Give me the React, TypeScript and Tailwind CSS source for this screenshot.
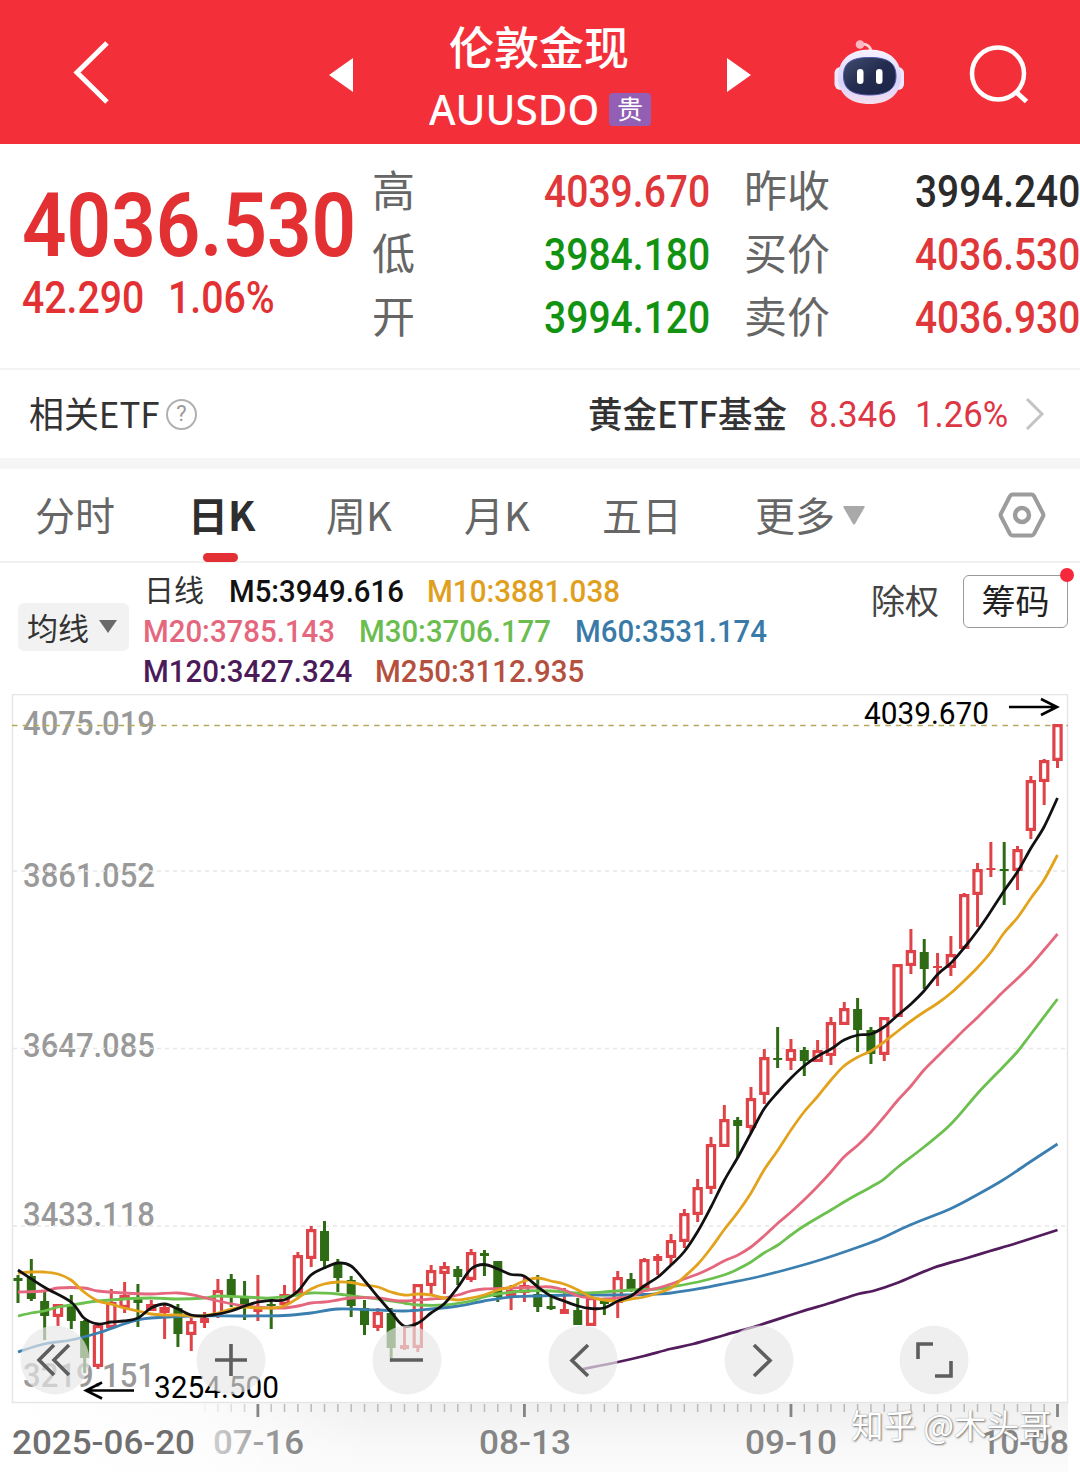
import { useLayoutEffect, useRef, useState, type ReactNode } from 'react';
import clsx from 'clsx';

const RED = '#df4348';
const GREEN = '#2f6b14';
const STEP = 13.327;
const START_X = 18;

// [direction, high, body top, body bottom, low]
type Candle = ['u' | 'd', number, number, number, number];

const candles: Candle[] = [
  ['d', 1275, 1278, 1281, 1303],
  ['d', 1259, 1276, 1299, 1301],
  ['d', 1290, 1301, 1316, 1340],
  ['u', 1304, 1304, 1317, 1326],
  ['d', 1295, 1304, 1321, 1329],
  ['d', 1320, 1321, 1358, 1373],
  ['u', 1323, 1325, 1367, 1369],
  ['u', 1289, 1302, 1328, 1328],
  ['u', 1282, 1295, 1308, 1313],
  ['d', 1284, 1297, 1303, 1327],
  ['u', 1300, 1304, 1311, 1311],
  ['u', 1305, 1307, 1313, 1339],
  ['d', 1304, 1308, 1334, 1347],
  ['u', 1318, 1321, 1335, 1351],
  ['u', 1312, 1318, 1323, 1328],
  ['u', 1279, 1290, 1317, 1318],
  ['d', 1274, 1279, 1297, 1307],
  ['d', 1281, 1298, 1307, 1320],
  ['u', 1275, 1307, 1312, 1321],
  ['d', 1298, 1304, 1306, 1329],
  ['u', 1285, 1294, 1305, 1308],
  ['u', 1252, 1255, 1294, 1294],
  ['u', 1226, 1229, 1259, 1267],
  ['d', 1221, 1231, 1261, 1268],
  ['d', 1259, 1263, 1278, 1292],
  ['d', 1276, 1280, 1306, 1317],
  ['d', 1300, 1308, 1325, 1335],
  ['u', 1308, 1312, 1328, 1331],
  ['d', 1308, 1313, 1348, 1362],
  ['u', 1325, 1345, 1349, 1350],
  ['u', 1284, 1284, 1348, 1352],
  ['u', 1265, 1270, 1286, 1295],
  ['u', 1262, 1266, 1274, 1294],
  ['d', 1266, 1269, 1277, 1285],
  ['u', 1249, 1252, 1280, 1282],
  ['d', 1250, 1253, 1256, 1276],
  ['d', 1261, 1261, 1297, 1302],
  ['u', 1285, 1290, 1296, 1310],
  ['u', 1277, 1285, 1293, 1302],
  ['d', 1275, 1294, 1307, 1312],
  ['d', 1296, 1306, 1309, 1310],
  ['u', 1288, 1309, 1314, 1314],
  ['d', 1298, 1310, 1325, 1325],
  ['u', 1295, 1297, 1326, 1326],
  ['d', 1298, 1301, 1304, 1315],
  ['u', 1271, 1277, 1303, 1318],
  ['d', 1273, 1279, 1290, 1292],
  ['u', 1258, 1259, 1288, 1288],
  ['u', 1254, 1256, 1261, 1275],
  ['u', 1234, 1240, 1258, 1265],
  ['u', 1209, 1213, 1242, 1248],
  ['u', 1179, 1187, 1215, 1222],
  ['u', 1137, 1144, 1189, 1194],
  ['u', 1105, 1119, 1147, 1147],
  ['d', 1117, 1120, 1126, 1158],
  ['u', 1087, 1098, 1128, 1133],
  ['u', 1049, 1057, 1095, 1104],
  ['d', 1027, 1058, 1059, 1068],
  ['u', 1039, 1049, 1061, 1070],
  ['d', 1047, 1050, 1061, 1076],
  ['u', 1040, 1050, 1062, 1062],
  ['u', 1017, 1022, 1056, 1065],
  ['u', 1002, 1008, 1025, 1025],
  ['d', 998, 1009, 1030, 1052],
  ['d', 1027, 1030, 1054, 1064],
  ['u', 1017, 1017, 1055, 1061],
  ['u', 964, 964, 1017, 1017],
  ['u', 929, 950, 966, 974],
  ['d', 939, 952, 969, 989],
  ['u', 953, 966, 968, 986],
  ['u', 936, 954, 968, 976],
  ['u', 893, 894, 949, 949],
  ['u', 863, 869, 895, 927],
  ['u', 842, 868, 870, 877],
  ['d', 842, 869, 870, 905],
  ['u', 846, 849, 871, 890],
  ['u', 776, 780, 831, 839],
  ['u', 759, 760, 782, 805],
  ['u', 724, 724, 761, 768],
];

const averages = [
  {
    color: '#531c5c',
    points:
      '583,1369 618,1362 644,1356 670,1349 693,1344 725,1335 760,1325 800,1312 830,1303 858,1294 873,1291 897,1283 933,1268 967,1258 990,1251 1017,1243 1057.5,1230',
  },
  {
    color: '#3a7fb0',
    points:
      '18,1352 44,1344 71,1340 98,1333 124,1324 138,1320 151,1318 191,1316 245,1316 284,1315.5 311,1313 338,1309 378,1310 404,1311 431,1309 458,1306 484,1301 511,1297 538,1296 578,1295 618,1295 644,1294.5 671,1293 703,1288 728,1283 753,1278 785,1270 820,1260 850,1250 880,1239 910,1225 950,1209 975,1196 1003,1180 1030,1162 1057.5,1144',
  },
  {
    color: '#6cc04e',
    points:
      '18,1316 31,1313 44,1311 58,1307 71,1305 84,1303 98,1301 124,1299 151,1298 178,1299 205,1298 218,1296 245,1297 271,1298 298,1295 311,1293 338,1294 351,1296 378,1299 404,1303 418,1305 444,1305 471,1301 484,1297 498,1294 524,1291 551,1291 578,1293 604,1292 631,1290 658,1289 671,1287 698,1282 724,1275 738,1269 751,1262 764,1253 778,1245 791,1235 804,1226 831,1210 844,1202 858,1194 871,1187 884,1179 898,1167 924,1147 951,1124 978,1093 1004,1066 1018,1051 1031,1034 1057.5,999',
  },
  {
    color: '#e5677e',
    points:
      '18,1292 44,1291 58,1288 84,1288 98,1291 124,1293 151,1294 178,1293 198,1296 218,1301 245,1306 271,1308 284,1308 298,1306 311,1303 324,1302 338,1300 351,1298 378,1298 391,1300 404,1301 431,1299 444,1298 458,1295 471,1291 484,1289 511,1288 538,1287 551,1287 564,1290 578,1296 591,1298 604,1299 631,1296 644,1291 658,1288 671,1284 684,1279 698,1274 711,1268 724,1261 738,1255 751,1247 764,1236 778,1223 791,1212 804,1200 818,1186 831,1172 844,1157 858,1145 871,1132 884,1117 898,1100 911,1086 924,1070 938,1056 951,1043 964,1030 978,1017 991,1004 1004,991 1018,978 1031,965 1044,950 1057.5,934',
  },
  {
    color: '#e3a21b',
    points:
      '18,1273 31,1272 44,1272 58,1274 71,1280 84,1292 98,1301 111,1304 124,1308 138,1311 151,1314 165,1315 178,1315 191,1316 205,1315.5 218,1313 231,1309 245,1307 258,1308 271,1308 284,1306 298,1298 311,1289 324,1284 338,1282 351,1282.5 364,1285 378,1287 391,1292 404,1295 418,1294 431,1295 444,1298 458,1300 471,1298 484,1295 498,1290 511,1287 524,1281 538,1278 551,1281 564,1284 578,1290 591,1297 604,1300 618,1301 631,1299 644,1297 658,1293 671,1288 684,1277 698,1264 711,1248 724,1230 738,1212 751,1193 764,1170 778,1150 791,1130 804,1112 818,1096 831,1080 844,1066 858,1057 871,1051 884,1042 898,1031 911,1021 924,1012 938,1003 951,993 964,981 978,967 991,952 1004,933 1018,917 1031,898 1044,880 1057.5,855',
  },
  {
    color: '#111111',
    points:
      '18,1270 44,1287 71,1302 84,1318 98,1324 111,1322 124,1321 138,1318 151,1308 165,1304 178,1309 191,1315 205,1316 218,1314 231,1311 245,1306 258,1302 271,1300.5 284,1300 298,1291 311,1275 324,1268 338,1263 351,1266 364,1280 378,1297 391,1312 404,1326 418,1323 431,1313 444,1304 458,1287 471,1269 484,1264.5 498,1269 511,1274.5 524,1276 538,1287 551,1296 564,1301 578,1306 591,1308.5 604,1308 618,1301 631,1296 644,1286 658,1277 671,1265 684,1252 698,1231 711,1207 724,1181 738,1157 751,1133 764,1109 778,1092 791,1078 804,1066 818,1056 831,1049 844,1040 858,1035 871,1034 884,1027 898,1015 911,1004 924,991 938,974 951,963 964,948 978,930 991,911 1004,891 1018,871 1031,848 1044,827 1057.5,798',
  },
];

const yLabels = [
  { text: '4075.019', y: 735 },
  { text: '3861.052', y: 887 },
  { text: '3647.085', y: 1056.5 },
  { text: '3433.118', y: 1226 },
  { text: '3219.151', y: 1387 },
];

const dates = [
  { text: '2025-06-20', x: 12, w: 183, fill: '#6f6f6f' },
  { text: '07-16', x: 213, w: 91, fill: 'url(#dateFade)' },
  { text: '08-13', x: 479, w: 92, fill: '#858585' },
  { text: '09-10', x: 745, w: 92, fill: '#858585' },
  { text: '10-08', x: 981, w: 88, fill: '#858585' },
];

// Catmull-Rom spline through the points
function smooth(points: string) {
  const p = points.split(' ').map((s) => s.split(',').map(Number));
  let d = `M${p[0][0]} ${p[0][1]}`;
  for (let i = 0; i < p.length - 1; i++) {
    const a = p[Math.max(i - 1, 0)];
    const b = p[i];
    const c = p[i + 1];
    const e = p[Math.min(i + 2, p.length - 1)];
    d += `C${b[0] + (c[0] - a[0]) / 6} ${b[1] + (c[1] - a[1]) / 6} ${c[0] - (e[0] - b[0]) / 6} ${c[1] - (e[1] - b[1]) / 6} ${c[0]} ${c[1]}`;
  }
  return d;
}

// Squeezes its text horizontally to the width of the box
function Fit({ className, children }: { className?: string; children: ReactNode }) {
  const box = useRef<HTMLSpanElement>(null);
  const inner = useRef<HTMLSpanElement>(null);
  const [scale, setScale] = useState(1);

  useLayoutEffect(() => {
    if (box.current && inner.current) {
      setScale(box.current.clientWidth / inner.current.offsetWidth);
    }
  }, []);

  return (
    <span ref={box} className={clsx('block shrink-0 whitespace-nowrap', className)}>
      <span ref={inner} className="inline-block origin-left" style={{ transform: `scaleX(${scale})` }}>
        {children}
      </span>
    </span>
  );
}

function RobotIcon() {
  return (
    <svg width="72" height="66" viewBox="0 0 72 66" className="shrink-0">
      <defs>
        <linearGradient id="shell" x1="0" y1="0" x2="0" y2="1">
          <stop offset="0" stopColor="#f7f2ff" />
          <stop offset="0.6" stopColor="#d9d3fa" />
          <stop offset="1" stopColor="#f5dfee" />
        </linearGradient>
        <linearGradient id="visor" x1="0" y1="0" x2="1" y2="1">
          <stop offset="0" stopColor="#414d70" />
          <stop offset="0.5" stopColor="#232c4e" />
          <stop offset="1" stopColor="#1b2447" />
        </linearGradient>
      </defs>
      <path d="M27 5.500C33 4 37.500 7 38 12" fill="none" stroke="#fbd3d8" strokeWidth="2.600" />
      <circle cx="27" cy="5.500" r="4.300" fill="#fbb8c2" />
      <rect x="1.500" y="28" width="12" height="23" rx="6" fill="#efe8fc" />
      <rect x="59" y="28" width="12" height="23" rx="6" fill="#efe8fc" />
      <path
        d="M36.500 10.500C57 10.500 68 22 68 38C68 55 56 65 36.500 65C17 65 5 55 5 38C5 22 16 10.500 36.500 10.500Z"
        fill="url(#shell)"
      />
      <path
        d="M36.500 18.500C55 18.500 63 24 63 37C63 50 54 56 36.500 56C19 56 10.500 50 10.500 37C10.500 24 18 18.500 36.500 18.500Z"
        fill="url(#visor)"
        stroke="#4e56a8"
        strokeWidth="1"
      />
      <rect x="24" y="30" width="6.500" height="15" rx="3.200" fill="#fff" />
      <rect x="43" y="30" width="6.500" height="15" rx="3.200" fill="#fff" />
    </svg>
  );
}

function Header() {
  return (
    <header className="flex h-36 items-start bg-[#f33039] text-white">
      <svg width="40" height="66" viewBox="0 0 40 66" className="ml-[72px] mt-10 shrink-0">
        <path d="M35 3L5 32.500L35 62" fill="none" stroke="currentColor" strokeWidth="5" />
      </svg>
      <svg width="24" height="34" viewBox="0 0 24 34" className="ml-[217px] mt-[58px] shrink-0">
        <path d="M24 0V34L0 17Z" fill="currentColor" />
      </svg>
      <div className="ml-[76px] mt-[18px] flex w-[224px] flex-col">
        <div className="ml-5 text-[45px] font-medium leading-[56px]">伦敦金现</div>
        <div className="mt-1.5 flex items-center">
          <Fit className="h-[58px] w-[170px] font-['Noto_Sans'] text-[42px] font-medium leading-[57px]">AUUSDO</Fit>
          <span className="ml-2.5 flex h-[33px] w-[42px] items-center justify-center rounded-sm bg-[#925fb4] pb-0.5 text-[26px] leading-none">
            贵
          </span>
        </div>
      </div>
      <svg width="24" height="34" viewBox="0 0 24 34" className="ml-[74px] mt-[58px] shrink-0">
        <path d="M0 0V34L24 17Z" fill="currentColor" />
      </svg>
      <div className="ml-[82px] mt-[39px]">
        <RobotIcon />
      </div>
      <svg width="62" height="62" viewBox="0 0 62 62" className="ml-16 mt-11 shrink-0">
        <circle cx="29" cy="29.500" r="26" fill="none" stroke="currentColor" strokeWidth="4.500" />
        <path d="M47 48L57.500 57.500" stroke="currentColor" strokeWidth="5" />
      </svg>
    </header>
  );
}

const quotes = [
  { label: '高', value: '4039.670', tone: 'text-[#df373a]', label2: '昨收', value2: '3994.240', tone2: 'text-[#2b2b2b]' },
  { label: '低', value: '3984.180', tone: 'text-[#119311]', label2: '买价', value2: '4036.530', tone2: 'text-[#df373a]' },
  { label: '开', value: '3994.120', tone: 'text-[#119311]', label2: '卖价', value2: '4036.930', tone2: 'text-[#df373a]' },
];

function QuotePanel() {
  return (
    <section className="flex h-[226px] border-b-2 border-[#f3f3f3]">
      <div className="ml-[22px] w-[350px] font-['Roboto'] font-medium text-[#e23033]">
        <Fit className="mt-9 h-[92px] w-[334px] text-[89px] font-semibold leading-[92px]">4036.530</Fit>
        <div className="mt-1 flex h-[44px] text-[44px] leading-[44px]">
          <Fit className="w-[122px]">42.290</Fit>
          <Fit className="ml-6 w-[107px]">1.06%</Fit>
        </div>
      </div>
      <div className="mt-[17px] flex flex-col">
        {quotes.map((q) => (
          <div key={q.label} className="flex h-[63px] items-start text-[43px] leading-[57px] text-[#666]">
            <span className="-mt-px w-[172px]">{q.label}</span>
            <Fit className={clsx("h-[63px] w-[166px] font-['Roboto'] text-[44px] font-medium leading-[63px]", q.tone)}>
              {q.value}
            </Fit>
            <span className="-mt-px ml-[34px] w-[171px]">{q.label2}</span>
            <Fit className={clsx("h-[63px] w-[165px] font-['Roboto'] text-[44px] font-medium leading-[63px]", q.tone2)}>
              {q.value2}
            </Fit>
          </div>
        ))}
      </div>
    </section>
  );
}

function EtfRow() {
  return (
    <section className="flex h-[88px] items-center text-[36px] leading-[46px] text-[#333]">
      <Fit className="ml-[29px] h-[50px] w-[131px]">相关ETF</Fit>
      <span className="ml-1.5 flex h-[31px] w-[31px] items-center justify-center rounded-full border-2 border-[#b0b0b0] font-['Roboto'] text-[22px] leading-none text-[#999]">
        ?
      </span>
      <Fit className="ml-[391px] h-[50px] w-[199px] font-medium">黄金ETF基金</Fit>
      <Fit className="ml-[22px] h-[50px] w-[88px] font-['Roboto'] text-[37px] leading-[52px] text-[#dd3645]">8.346</Fit>
      <Fit className="ml-[18px] h-[50px] w-[93px] font-['Roboto'] text-[37px] leading-[52px] text-[#dd3645]">1.26%</Fit>
      <svg width="20" height="34" viewBox="0 0 20 34" className="ml-[17px]">
        <path d="M2 2L17 17L2 32" fill="none" stroke="#c4c4c4" strokeWidth="3" />
      </svg>
    </section>
  );
}

function Tabs() {
  return (
    <nav className="flex h-[94px] items-center border-b-2 border-[#f1f1f1] text-[40px] leading-[60px] text-[#666]">
      <span className="-mt-[3px] ml-[35px] w-[153px]">分时</span>
      <span className="relative -mt-[3px] w-[138px] font-bold text-[#2e2e2e]">
        日K
        <span className="absolute left-[15px] top-[69px] h-[9px] w-[35px] rounded-full bg-[#e23035]" />
      </span>
      <span className="-mt-[3px] w-[138px]">周K</span>
      <span className="-mt-[3px] w-[138px]">月K</span>
      <span className="-mt-[3px] w-[153px]">五日</span>
      <span className="-mt-[3px]">更多</span>
      <svg width="22" height="19" viewBox="0 0 22 19" className="ml-2">
        <path d="M1 0H21Q22 0 21.500 1.500L12 18Q11 19 10 18L0.500 1.500Q0 0 1 0Z" fill="#a9a9a9" />
      </svg>
      <svg width="48" height="46" viewBox="0 0 48 46" fill="none" stroke="#9c9c9c" className="ml-[133px]">
        <path
          d="M14.500 2.500H33.500Q35 2.500 36 4L45 21.500Q45.800 23 45 24.500L36 42Q35 43.500 33.500 43.500H14.500Q13 43.500 12 42L3 24.500Q2.200 23 3 21.500L12 4Q13 2.500 14.500 2.500Z"
          strokeWidth="4"
        />
        <circle cx="24" cy="23" r="7" strokeWidth="4.500" />
      </svg>
    </nav>
  );
}

function AverageBar() {
  return (
    <section className="flex h-[131px] text-[#333]">
      <button className="ml-[18px] mt-10 flex h-12 w-[111px] items-center rounded-md bg-[#f2f2f2] pb-px pl-[9px] text-[31px] leading-none">
        均线
        <svg width="18" height="13" viewBox="0 0 18 13" className="ml-2.5">
          <path d="M0 0H18L9 13Z" fill="#6a6a6a" />
        </svg>
      </button>
      <div className="ml-3.5 mt-2 w-[639px] font-['Roboto'] text-[32px] font-medium leading-10">
        <div className="flex h-10">
          <span className="ml-px w-[85px] font-['Noto_Sans_CJK_SC'] text-[30px] font-normal leading-[35px]">日线</span>
          <Fit className="w-[175px] text-[#111]">M5:3949.616</Fit>
          <Fit className="ml-[23px] w-[193px] text-[#e0a01e]">M10:3881.038</Fit>
        </div>
        <div className="flex h-10">
          <Fit className="w-[192px] text-[#e5677e]">M20:3785.143</Fit>
          <Fit className="ml-6 w-[192px] text-[#6cbd50]">M30:3706.177</Fit>
          <Fit className="ml-6 w-[192px] text-[#3a7aa8]">M60:3531.174</Fit>
        </div>
        <div className="flex h-10">
          <Fit className="w-[209px] text-[#4b1a58]">M120:3427.324</Fit>
          <Fit className="ml-[23px] w-[209px] text-[#b5503f]">M250:3112.935</Fit>
        </div>
      </div>
      <span className="ml-[89px] mt-[13px] text-[34px] leading-[48px] text-[#444]">除权</span>
      <button className="relative ml-6 mt-3 flex h-[53px] w-[105px] shrink-0 items-center justify-center rounded-md border-[1.5px] border-[#999] pb-[3px] text-[34px] leading-none text-[#222]">
        筹码
        <span className="absolute -right-[7px] -top-2 h-3.5 w-3.5 rounded-full bg-[#f5283c]" />
      </button>
    </section>
  );
}

function CandleMark({ candle, x }: { candle: Candle; x: number }) {
  const [dir, high, top, bottom, low] = candle;
  const color = dir === 'u' ? RED : GREEN;
  const height = bottom - top;
  const hollow = dir === 'u' && height > 5;

  return (
    <g>
      <path d={`M${x} ${high}V${low}`} stroke={color} strokeWidth="3" />
      {hollow ? (
        <rect x={x - 3.6} y={top + 1.6} width="7.200" height={height - 3.2} fill="#fff" stroke={color} strokeWidth="3.200" />
      ) : (
        <rect x={x - 4.5} y={top} width="9" height={Math.max(height, 2)} fill={color} />
      )}
    </g>
  );
}

const controls = [
  { x: 55, d: 'M54 1345L39 1360L54 1375M69 1345L54 1360L69 1375' },
  { x: 231, d: 'M215 1360H247M231 1344V1376' },
  { x: 407, d: 'M390 1360H423' },
  { x: 583, d: 'M588 1345L572 1360.500L588 1376' },
  { x: 759, d: 'M754 1345L770 1360.500L754 1376' },
  { x: 934, d: 'M918 1359V1344H933M951 1361V1376H935' },
];

function Chart() {
  return (
    <svg width="1080" height="778" viewBox="0 694 1080 778" className="block font-['Roboto']">
      <defs>
        <linearGradient id="axisBg" x1="0" y1="0" x2="0" y2="1">
          <stop offset="0" stopColor="#efefef" />
          <stop offset="0.600" stopColor="#f8f8f8" />
          <stop offset="1" stopColor="#fbfbfb" />
        </linearGradient>
        <linearGradient id="axisFade" x1="0" y1="0" x2="1" y2="0">
          <stop offset="0" stopColor="#fff" />
          <stop offset="0.180" stopColor="#fff" stopOpacity="0.800" />
          <stop offset="0.350" stopColor="#fff" stopOpacity="0" />
        </linearGradient>
        <linearGradient id="dateFade" x1="0" y1="0" x2="1" y2="0">
          <stop offset="0" stopColor="#cfcfcf" />
          <stop offset="0.500" stopColor="#a2a2a2" />
          <stop offset="1" stopColor="#858585" />
        </linearGradient>
      </defs>

      <rect x="0" y="1402" width="1068" height="70" fill="url(#axisBg)" />
      <rect x="0" y="1402" width="1068" height="70" fill="url(#axisFade)" />
      <rect x="12.500" y="694.500" width="1055" height="708" fill="none" stroke="#e6e6e6" strokeWidth="1.500" />

      <g fill="#999" fontSize="34" fontWeight="500">
        {yLabels.map((l) => (
          <text key={l.text} x="23" y={l.y} textLength="132" lengthAdjust="spacingAndGlyphs">
            {l.text}
          </text>
        ))}
      </g>
      {[871, 1048.5, 1226].map((y) => (
        <path key={y} d={`M13 ${y}H1067`} stroke="#e8e8e8" strokeWidth="1.300" strokeDasharray="4 4" />
      ))}
      <path d="M12 725.500H1068" stroke="#b3a95a" strokeWidth="1.600" strokeDasharray="5.500 5.150" />

      {candles.map((c, i) => (
        <CandleMark key={i} candle={c} x={START_X + i * STEP} />
      ))}
      {averages.map((a) => (
        <path key={a.color} d={smooth(a.points)} fill="none" stroke={a.color} strokeWidth="2.800" strokeLinejoin="round" />
      ))}

      <g fill="#000" fontSize="30.500">
        <text x="864" y="724" textLength="125" lengthAdjust="spacingAndGlyphs">
          4039.670
        </text>
        <text x="154" y="1398" textLength="125" lengthAdjust="spacingAndGlyphs">
          3254.500
        </text>
      </g>
      <g fill="none" stroke="#000" strokeWidth="2.600">
        <path d="M1009 707H1057M1041 699L1057 707L1041 715" />
        <path d="M134 1390.500H86M102 1382.500L86 1390.500L102 1398.500" />
      </g>

      {candles.map((_, i) => {
        if (i < 14) return null;
        const major = i % 20 === 18;
        return (
          <path
            key={i}
            d={`M${START_X + i * STEP} 1404V${major ? 1417 : 1412}`}
            stroke={major ? '#858585' : '#bdbdbd'}
            strokeWidth={major ? 2.8 : 1.6}
            opacity={major ? 1 : Math.min(1, (i - 13) / 7)}
          />
        );
      })}
      <g fontSize="34" fontWeight="500">
        {dates.map((d) => (
          <text key={d.text} x={d.x} y="1454" fill={d.fill} textLength={d.w} lengthAdjust="spacingAndGlyphs">
            {d.text}
          </text>
        ))}
      </g>

      {controls.map((c) => (
        <g key={c.x}>
          <circle cx={c.x} cy="1360" r="34.500" fill="#e7e7e7" fillOpacity="0.680" />
          <path d={c.d} fill="none" stroke="#5e5e5e" strokeWidth="3.600" />
        </g>
      ))}
    </svg>
  );
}

export default function App() {
  return (
    <div
      lang="zh-CN"
      className="relative h-[1472px] w-[1080px] overflow-hidden bg-white font-['Noto_Sans_CJK_SC',sans-serif]"
    >
      <Header />
      <QuotePanel />
      <EtfRow />
      <div className="h-[11px] bg-[#f5f5f5]" />
      <Tabs />
      <AverageBar />
      <Chart />
      <div className="absolute left-[851px] top-[1402px] whitespace-nowrap text-[32.500px] leading-[44px] text-white [text-shadow:1px_1px_2px_#777,0_0_1px_#999]">
        知乎 @木头哥
      </div>
    </div>
  );
}
